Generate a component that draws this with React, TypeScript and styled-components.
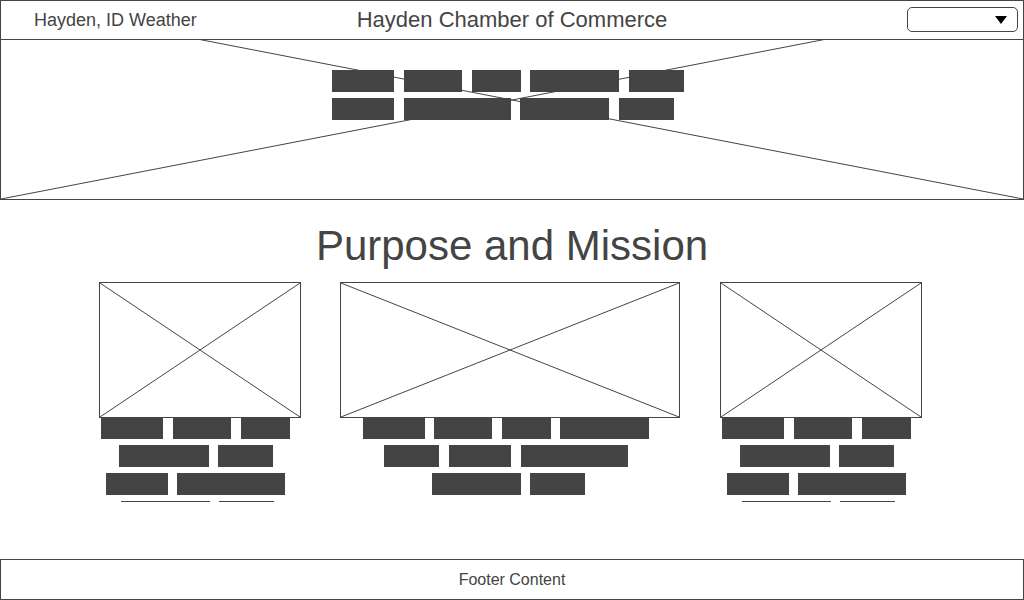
import React from "react";
import styled, { createGlobalStyle } from "styled-components";

const ink = "#444";

const GlobalStyle = createGlobalStyle`
  *, *::before, *::after { box-sizing: border-box; }
  body {
    margin: 0;
    background: #fff;
    color: ${ink};
    font-family: "Liberation Sans", Arial, sans-serif;
  }
`;

const Page = styled.div`
  display: flex;
  flex-direction: column;
  min-height: 100vh;
`;

const Hero = styled.section`
  position: relative;
  min-height: 200px;
`;

const HeroFrame = styled.div`
  position: absolute;
  inset: 0;
  border: 1px solid ${ink};
`;

const CrossSvg = styled.svg`
  display: block;
  width: 100%;
  height: 100%;
`;

const Header = styled.header`
  position: relative;
  display: grid;
  grid-template-columns: 1fr auto 1fr;
  align-items: center;
  height: 40px;
  padding: 0 5px;
  border: 1px solid ${ink};
  background: #fff;
`;

const WeatherLabel = styled.span`
  padding-left: 28px;
  font-size: 18px;
  line-height: 24px;
`;

const SiteTitle = styled.h1`
  margin: 0;
  font-size: 22px;
  font-weight: 400;
  line-height: 28px;
`;

const MenuField = styled.label`
  position: relative;
  justify-self: end;
  display: flex;
  width: 111px;
  margin-bottom: 1px;
`;

const MenuSelect = styled.select`
  appearance: none;
  width: 100%;
  height: 25px;
  padding: 0 28px 0 8px;
  border: 1px solid ${ink};
  border-radius: 5px;
  background: #fff;
  color: ${ink};
  font: inherit;
`;

const MenuArrow = styled.svg`
  position: absolute;
  top: 9px;
  right: 11px;
  width: 12px;
  height: 8px;
  pointer-events: none;
`;

const HeroCopy = styled.div`
  position: relative;
  width: 360px;
  margin: 30px auto 0;
`;

const Copy = styled.div`
  max-height: 85px;
  margin-top: -1px;
  overflow: hidden;
`;

const Line = styled.div<{ $width: number; $trail?: number }>`
  display: flex;
  justify-content: space-between;
  width: ${(p) => p.$width + (p.$trail ?? 0)}px;
  padding-right: ${(p) => p.$trail ?? 0}px;
  margin: 0 ${(p) => (p.$trail ? "auto" : 0)} 6px;
`;

const Word = styled.span<{ $width: number }>`
  width: ${(p) => p.$width}px;
  height: 22px;
  background: ${ink};
`;

const Main = styled.main`
  padding: 22px 16px 24px;
`;

const Heading = styled.h2`
  margin: 0 0 12px;
  font-size: 42px;
  font-weight: 400;
  line-height: 48px;
  text-align: center;
`;

const Columns = styled.div`
  display: grid;
  grid-template-columns: 202fr 341fr 202fr;
  gap: 39px;
  max-width: 826px;
  margin: 0 auto;
  padding-right: 3px;
`;

const Frame = styled.div`
  max-width: 340px;
  height: 136px;
  border: 1px solid ${ink};
`;

const Footer = styled.footer`
  display: flex;
  align-items: center;
  justify-content: center;
  height: 41px;
  margin-top: auto;
  border: 1px solid ${ink};
  font-size: 16px;
  line-height: 20px;
`;

type TextLine = { width: number; words: number[]; last?: boolean };

const heroLines: TextLine[] = [
  { width: 352, words: [62, 58, 49, 89, 55] },
  { width: 342, words: [62, 107, 89, 55] },
];

const narrowLines: TextLine[] = [
  { width: 189, words: [62, 58, 49] },
  { width: 154, words: [90, 55] },
  { width: 179, words: [62, 108] },
  { width: 153, words: [89, 55], last: true },
];

const wideLines: TextLine[] = [
  { width: 287, words: [62, 58, 49, 89] },
  { width: 244, words: [55, 62, 107] },
  { width: 153, words: [89, 55], last: true },
];

function Cross() {
  return (
    <CrossSvg aria-hidden="true" stroke={ink} fill="none">
      <line x1="0" y1="0" x2="100%" y2="100%" />
      <line x1="0" y1="100%" x2="100%" y2="0" />
    </CrossSvg>
  );
}

function Lines({ lines, centered }: { lines: TextLine[]; centered?: boolean }) {
  return (
    <>
      {lines.map((line, i) => (
        <Line key={i} $width={line.width} $trail={centered ? (line.last ? 5 : 9) : undefined}>
          {line.words.map((w, j) => (
            <Word key={j} $width={w} />
          ))}
        </Line>
      ))}
    </>
  );
}

export default function App() {
  return (
    <Page>
      <GlobalStyle />
      <Hero>
        <HeroFrame>
          <Cross />
        </HeroFrame>
        <Header>
          <WeatherLabel>Hayden, ID Weather</WeatherLabel>
          <SiteTitle>Hayden Chamber of Commerce</SiteTitle>
          <MenuField>
            <MenuSelect aria-label="Menu" defaultValue="">
              <option value="" />
            </MenuSelect>
            <MenuArrow viewBox="0 0 12 8" aria-hidden="true">
              <path d="M0 0H12L6 8Z" fill="#000" />
            </MenuArrow>
          </MenuField>
        </Header>
        <HeroCopy>
          <Lines lines={heroLines} />
        </HeroCopy>
      </Hero>
      <Main>
        <Heading>Purpose and Mission</Heading>
        <Columns>
          {[narrowLines, wideLines, narrowLines].map((lines, i) => (
            <div key={i}>
              <Frame>
                <Cross />
              </Frame>
              <Copy>
                <Lines lines={lines} centered />
              </Copy>
            </div>
          ))}
        </Columns>
      </Main>
      <Footer>Footer Content</Footer>
    </Page>
  );
}
